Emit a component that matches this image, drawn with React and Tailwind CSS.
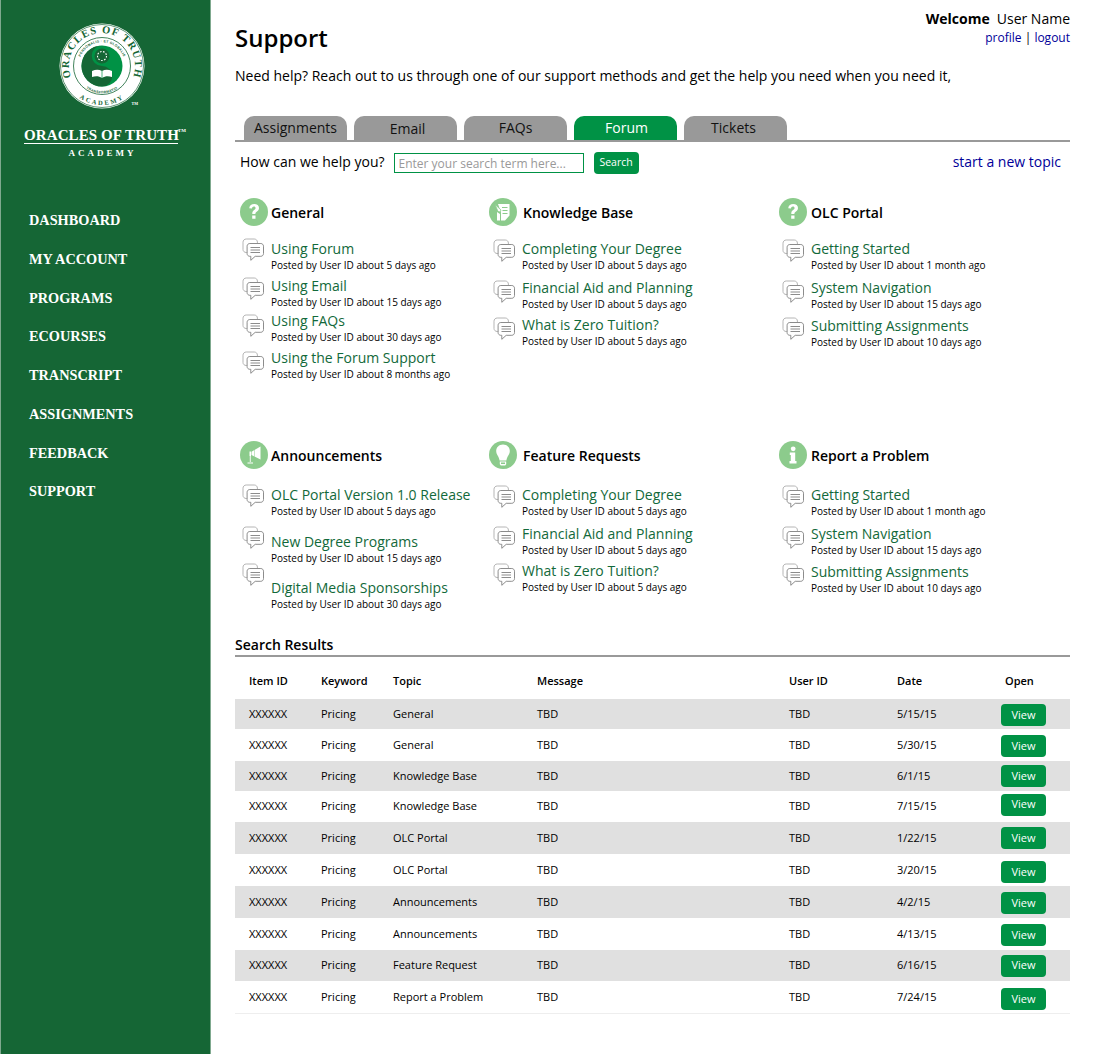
const NAV = ["Dashboard", "My Account", "Programs", "eCourses", "Transcript", "Assignments", "Feedback", "Support"];

const TABS = [
  { label: "Assignments", cls: "ml-[9px]" },
  { label: "Email", cls: "pl-[4px] pt-[1px]" },
  { label: "FAQs", cls: "" },
  { label: "Forum", cls: "pl-[2px]", active: true },
  { label: "Tickets", cls: "pr-[4px]" },
];

// spacing in the forum lists is uneven in the source, so each row carries its own margins
const TOP_SECTIONS = [
  {
    title: "General",
    icon: "question",
    cls: "w-[249px]",
    headGap: "gap-[3px]",
    pad: "pl-[2px]",
    items: [
      { title: "Using Forum", by: "about 5 days ago", cls: "mt-0", icon: "mt-0" },
      { title: "Using Email", by: "about 15 days ago", cls: "mt-[4px]", icon: "mt-[2px]" },
      { title: "Using FAQs", by: "about 30 days ago", cls: "mt-[2px]", icon: "mt-[4px]" },
      { title: "Using the Forum Support", by: "about 8 months ago", cls: "mt-[4px]", icon: "mt-[4px]" },
    ],
  },
  {
    title: "Knowledge Base",
    icon: "book",
    cls: "w-[290px]",
    headGap: "gap-[6px]",
    pad: "pl-[4px]",
    items: [
      { title: "Completing Your Degree", by: "about 5 days ago", cls: "mt-0", icon: "mt-[1px]" },
      { title: "Financial Aid and Planning", by: "about 5 days ago", cls: "mt-[6px]", icon: "mt-[3px]" },
      { title: "What is Zero Tuition?", by: "about 5 days ago", cls: "mt-[4px]", icon: "mt-[3px]" },
    ],
  },
  {
    title: "OLC Portal",
    icon: "question",
    cls: "flex-1",
    headGap: "gap-[4px]",
    pad: "pl-[3px]",
    items: [
      { title: "Getting Started", by: "about 1 month ago", cls: "mt-0", icon: "mt-[1px]" },
      { title: "System Navigation", by: "about 15 days ago", cls: "mt-[6px]", icon: "mt-[3px]" },
      { title: "Submitting Assignments", by: "about 10 days ago", cls: "mt-[5px]", icon: "mt-[2px]" },
    ],
  },
];

const BOTTOM_SECTIONS = [
  {
    title: "Announcements",
    icon: "horn",
    cls: "w-[249px]",
    headGap: "gap-[3px]",
    pad: "pl-[2px]",
    items: [
      { title: "OLC Portal Version 1.0 Release", by: "about 5 days ago", cls: "mt-0", icon: "mt-0" },
      { title: "New Degree Programs", by: "about 15 days ago", cls: "mt-[14px]", icon: "-mt-[5px]" },
      { title: "Digital Media Sponsorships", by: "about 30 days ago", cls: "mt-[13px]", icon: "-mt-[14px]" },
    ],
  },
  {
    title: "Feature Requests",
    icon: "bulb",
    cls: "w-[290px]",
    headGap: "gap-[6px]",
    pad: "pl-[4px]",
    items: [
      { title: "Completing Your Degree", by: "about 5 days ago", cls: "mt-0", icon: "mt-[1px]" },
      { title: "Financial Aid and Planning", by: "about 5 days ago", cls: "mt-[6px]", icon: "mt-[3px]" },
      { title: "What is Zero Tuition?", by: "about 5 days ago", cls: "mt-[4px]", icon: "mt-[3px]" },
    ],
  },
  {
    title: "Report a Problem",
    icon: "info",
    cls: "flex-1",
    headGap: "gap-[4px]",
    pad: "pl-[3px]",
    items: [
      { title: "Getting Started", by: "about 1 month ago", cls: "mt-0", icon: "mt-[1px]" },
      { title: "System Navigation", by: "about 15 days ago", cls: "mt-[6px]", icon: "mt-[3px]" },
      { title: "Submitting Assignments", by: "about 10 days ago", cls: "mt-[5px]", icon: "mt-[2px]" },
    ],
  },
];

const ROWS = [
  ["General", "5/15/15", "h-[30px] bg-[#e0e0e0]", "translate-y-[1px]"],
  ["General", "5/30/15", "h-[32px]", "translate-y-[1px]"],
  ["Knowledge Base", "6/1/15", "h-[30px] bg-[#e0e0e0]", "translate-y-0"],
  ["Knowledge Base", "7/15/15", "h-[31px]", "-translate-y-[2px]"],
  ["OLC Portal", "1/22/15", "h-[32px] bg-[#e0e0e0]", "translate-y-0"],
  ["OLC Portal", "3/20/15", "h-[32px]", "translate-y-[2px]"],
  ["Announcements", "4/2/15", "h-[32px] bg-[#e0e0e0]", "translate-y-[1px]"],
  ["Announcements", "4/13/15", "h-[32px]", "translate-y-[1px]"],
  ["Feature Request", "6/16/15", "h-[31px] bg-[#e0e0e0]", "translate-y-0"],
  ["Report a Problem", "7/24/15", "h-[32px] border-b border-[#eeeeee]", "translate-y-[2px]"],
];

function CircleIcon({ type }) {
  return (
    <svg viewBox="0 0 28 28" className="size-[28px] shrink-0">
      <circle cx="14" cy="14" r="14" fill="#8ccb8c" />
      {type === "question" && (
        <path
          d="M9.2 10.2c.4-2.8 2.4-4.2 5-4.2 2.800 0 4.800 1.600 4.800 4 0 1.800-1 2.800-2.300 3.700-1 .7-1.300 1.100-1.300 2.300h-3.100c-.1-2 .5-3 1.800-3.900 1-.7 1.500-1.200 1.500-2 0-.9-.7-1.500-1.700-1.500-1.100 0-1.700.7-1.900 1.900zM12.200 17.500h3.300v3.300h-3.300z"
          fill="#fff"
        />
      )}
      {type === "book" && (
        <g>
          <path d="M9 6h11.500v11.500l-4.500 5h-4v-8z" fill="#fff" />
          <path d="M6 6.500l6 5.500-1 2-2-.5z" fill="#fff" stroke="#8ccb8c" strokeWidth="0.8" />
          <path d="M13 9.500h5.500M13.500 12.500h5M13.500 15.500h5" stroke="#8ccb8c" strokeWidth="1" />
          <path d="M8 14l3 2v6.500h-3z" fill="#fff" />
        </g>
      )}
      {type === "horn" && (
        <g fill="#fff">
          <path d="M14.500 9l6-3.500v13l-6-3z" />
          <path d="M9.500 10.500h1.500v4.500h-1.500z" />
          <path d="M11.500 10.800l2.500-1.500v6l-2.500-1.200z" />
          <path d="M9.800 15h.9v6h-.9zM7.500 21.500h5.500v1h-5.500z" />
        </g>
      )}
      {type === "bulb" && (
        <g fill="#fff">
          <path d="M14 3.500c-4 0-6.800 2.900-6.800 6.500 0 3.600 2.800 5.200 3.400 9.500h6.800c.6-4.300 3.400-5.900 3.400-9.500 0-3.600-2.800-6.500-6.800-6.500z" />
          <path d="M10.800 20.500h6.400v2.800l-1 1.200h-4.400l-1-1.200zM12 21.500v1.500h4v-1.500z" fillRule="evenodd" />
        </g>
      )}
      {type === "info" && (
        <g fill="#fff">
          <circle cx="14.200" cy="7.800" r="2.400" />
          <path d="M10.800 11.500h5.400v8.500h1.300v2.500h-7v-2.500h1.300v-6h-1z" />
        </g>
      )}
    </svg>
  );
}

function ChatIcon({ cls }) {
  return (
    <svg viewBox="0 0 23 24" className={`h-[24px] w-[23px] shrink-0 ${cls}`} fill="none" strokeLinejoin="round">
      <path
        d="M7 14.500H4.200C2.400 14.500 1 13.200 1 11.500V4.200C1 2.400 2.400 1 4.200 1h8c1.800 0 3.200 1.300 3.200 3v1.500"
        stroke="#b5b5b5"
        strokeWidth="1"
      />
      <path
        d="M7.800 5.500h11c1.500 0 2.700 1.200 2.700 2.700v7.400c0 1.500-1.200 2.700-2.700 2.700h-5.600l-4.400 4v-4H7.800c-1.500 0-2.700-1.200-2.700-2.700V8.200c0-1.500 1.200-2.700 2.700-2.700z"
        fill="#fff"
        stroke="#8c8c8c"
        strokeWidth="1"
      />
      <path d="M8.500 9.500h9.500M8.500 12h9.500M8.500 14.500h9.500" stroke="#8c8c8c" strokeWidth="1" />
    </svg>
  );
}

function TopicSection({ section, boxCls, listCls }) {
  return (
    <div className={`${section.cls} ${boxCls}`}>
      <div className={`flex h-[28px] items-center ${section.headGap}`}>
        <CircleIcon type={section.icon} />
        <h3 className="text-[14px] font-semibold text-black">{section.title}</h3>
      </div>
      <ul className={listCls}>
        {section.items.map((item) => (
          <li key={item.title} className={`flex gap-[7px] ${section.pad} ${item.cls}`}>
            <ChatIcon cls={item.icon} />
            <div className="-ml-[1px] pt-[1px]">
              <a href="#" className="block text-[14px] leading-[20px] whitespace-nowrap text-[#12693a]">
                {item.title}
              </a>
              <p className="text-[10px] leading-[12px] text-black">Posted by User ID {item.by}</p>
            </div>
          </li>
        ))}
      </ul>
    </div>
  );
}

function Seal() {
  return (
    <svg viewBox="0 0 90 90" className="h-[90px] w-[90px]">
      <defs>
        <path id="sealTop" d="M14 56.300A33 33 0 1 1 76 56.300" />
        <path id="sealBottom" d="M17.400 72.600A39 39 0 0 0 72.600 72.600" />
        <path id="sealInner" d="M22.500 49A23 23 0 1 1 67.500 49" />
        <path id="sealInnerLow" d="M21.700 59A27 27 0 0 0 68.300 59" />
      </defs>
      <circle cx="45" cy="45" r="42.500" fill="#fff" />
      <circle cx="45" cy="45" r="41.500" fill="none" stroke="#156635" strokeWidth="0.700" />
      <text fill="#156635" fontFamily="'Liberation Serif', serif" fontWeight="700" fontSize="10.500" letterSpacing="1.200">
        <textPath href="#sealTop" startOffset="50%" textAnchor="middle">ORACLES OF TRUTH</textPath>
      </text>
      <text fill="#156635" fontFamily="'Liberation Serif', serif" fontWeight="700" fontSize="6.500" letterSpacing="2">
        <textPath href="#sealBottom" startOffset="50%" textAnchor="middle">ACADEMY</textPath>
      </text>
      <circle cx="45" cy="45" r="28.500" fill="#fff" stroke="#156635" strokeWidth="0.800" />
      <text fill="#156635" fontFamily="'Liberation Sans', sans-serif" fontSize="3.400" fontWeight="700" letterSpacing="0.300">
        <textPath href="#sealInner" startOffset="50%" textAnchor="middle">PERSONALIS · ET GLOBALIS</textPath>
      </text>
      <text fill="#156635" fontFamily="'Liberation Sans', sans-serif" fontSize="3.400" fontWeight="700" letterSpacing="0.300">
        <textPath href="#sealInnerLow" startOffset="50%" textAnchor="middle">TRANSFORMATIO</textPath>
      </text>
      <circle cx="45" cy="45" r="20.500" fill="#009245" />
      <path d="M45 24.500a20.500 20.500 0 0 0 0 41 10.250 10.250 0 0 0 0-20.500 10.250 10.250 0 0 1 0-20.500z" fill="#156635" />
      <circle cx="45" cy="35" r="7.500" fill="#156635" />
      <circle cx="45" cy="35" r="4.500" fill="none" stroke="#fff" strokeWidth="1.100" strokeDasharray="1.600 1.500" />
      <path d="M35 56v-6c3.500-1.800 7-1.800 10 0 3-1.800 6.500-1.800 10 0v6c-3.500-1-7-1-10 1-3-2-6.500-2-10-1z" fill="#fff" />
      <path d="M45 50v7" stroke="#009245" strokeWidth="0.700" />
    </svg>
  );
}

function Sidebar() {
  return (
    <aside className="flex w-[211px] shrink-0 flex-col border-x border-[#7fa98f] bg-[#156635] font-['Liberation_Serif',serif] text-white">
      <div className="relative mt-[21px] ml-[56px] w-[90px]">
        <Seal />
        <span className="absolute right-[9px] bottom-[5px] text-[4px] font-bold leading-none">TM</span>
      </div>
      <div className="mt-[17px] ml-[23px] w-[154px] text-center">
        <p className="relative border-b border-white text-[15px] leading-[15px] font-bold tracking-[0.1px] whitespace-nowrap">
          ORACLES OF TRUTH
          <span className="absolute -right-[8px] top-0 text-[5px] leading-none">TM</span>
        </p>
        <p className="mt-[4px] pl-[3px] text-[9px] leading-[10px] font-bold tracking-[3px]">ACADEMY</p>
      </div>
      <nav className="mt-[52px] w-full pl-[28px]">
        <ul className="flex flex-col gap-[18.750px]">
          {NAV.map((item) => (
            <li key={item} className="text-[14.300px] leading-[20px] font-bold uppercase">
              {item}
            </li>
          ))}
        </ul>
      </nav>
    </aside>
  );
}

function ResultsTable() {
  return (
    <table className="mt-[6px] w-full table-fixed border-collapse text-[11px] text-black">
      <colgroup>
        <col className="w-[86px]" />
        <col className="w-[72px]" />
        <col className="w-[144px]" />
        <col className="w-[252px]" />
        <col className="w-[108px]" />
        <col className="w-[108px]" />
        <col />
      </colgroup>
      <thead>
        <tr className="h-[36px] text-left">
          <th className="pl-[14px] font-semibold">Item ID</th>
          <th className="font-semibold">Keyword</th>
          <th className="font-semibold">Topic</th>
          <th className="font-semibold">Message</th>
          <th className="font-semibold">User ID</th>
          <th className="font-semibold">Date</th>
          <th className="font-semibold">Open</th>
        </tr>
      </thead>
      <tbody>
        {ROWS.map(([topic, date, rowCls, btnCls]) => (
          <tr key={date} className={rowCls}>
            <td className="pl-[14px]">XXXXXX</td>
            <td>Pricing</td>
            <td>{topic}</td>
            <td>TBD</td>
            <td>TBD</td>
            <td>{date}</td>
            <td>
              <a
                href="#"
                className={`-ml-[4px] flex h-[22px] w-[45px] items-center justify-center rounded-[4px] bg-[#009245] text-white ${btnCls}`}
              >
                View
              </a>
            </td>
          </tr>
        ))}
      </tbody>
    </table>
  );
}

export default function App() {
  return (
    <div className="flex min-h-[1054px] bg-white font-['Open_Sans',sans-serif] text-black">
      <Sidebar />
      <main className="w-[859px] pl-[24px]">
        <div className="flex items-start justify-between pt-[9px]">
          <h1 className="pt-[12px] text-[24px] leading-[33px] font-semibold">Support</h1>
          <div className="text-right">
            <p className="text-[14px] leading-[19px]">
              <span className="font-bold">Welcome</span>
              <span className="ml-[7px]">User Name</span>
            </p>
            <p className="mt-[1px] text-[12px] leading-[17px]">
              <a href="#" className="text-[#000099]">profile</a> | <a href="#" className="text-[#000099]">logout</a>
            </p>
          </div>
        </div>
        <p className="mt-[12px] text-[14px] leading-[19px]">
          Need help? Reach out to us through one of our support methods and get the help you need when you need it,
        </p>

        <div className="mt-[31px] flex gap-[7px] border-b-2 border-[#999999]">
          {TABS.map((tab) => (
            <button
              key={tab.label}
              type="button"
              className={`${tab.cls} h-[24px] w-[103px] rounded-t-[10px] text-[14px] leading-[24px] ${
                tab.active ? "bg-[#009245] text-white" : "bg-[#999999] text-[#111111]"
              }`}
            >
              {tab.label}
            </button>
          ))}
        </div>

        <div className="mt-[10px] flex h-[22px] items-center pl-[5px] pr-[9px]">
          <label className="pb-[2px] text-[14px] leading-[20px]">How can we help you?</label>
          <input
            readOnly
            placeholder="Enter your search term here..."
            className="ml-[9px] h-[20px] w-[190px] border border-[#009245] px-[4px] text-[12px] placeholder:text-[#999999]"
          />
          <button type="button" className="ml-[10px] h-[22px] w-[45px] rounded-[4px] bg-[#009245] text-[10.500px] text-white">
            Search
          </button>
          <a href="#" className="ml-auto pb-[2px] text-[14px] leading-[20px] text-[#000099]">start a new topic</a>
        </div>

        <div className="mt-[24px] flex pl-[5px]">
          {TOP_SECTIONS.map((section) => (
            <TopicSection key={section.title} section={section} boxCls="h-[243px]" listCls="mt-[12px]" />
          ))}
        </div>
        <div className="flex pl-[5px]">
          {BOTTOM_SECTIONS.map((section) => (
            <TopicSection key={section.title} section={section} boxCls="h-[193px]" listCls="mt-[15px]" />
          ))}
        </div>

        <h2 className="border-b-2 border-[#999999] text-[14px] leading-[21px] font-semibold">Search Results</h2>
        <ResultsTable />
      </main>
    </div>
  );
}
